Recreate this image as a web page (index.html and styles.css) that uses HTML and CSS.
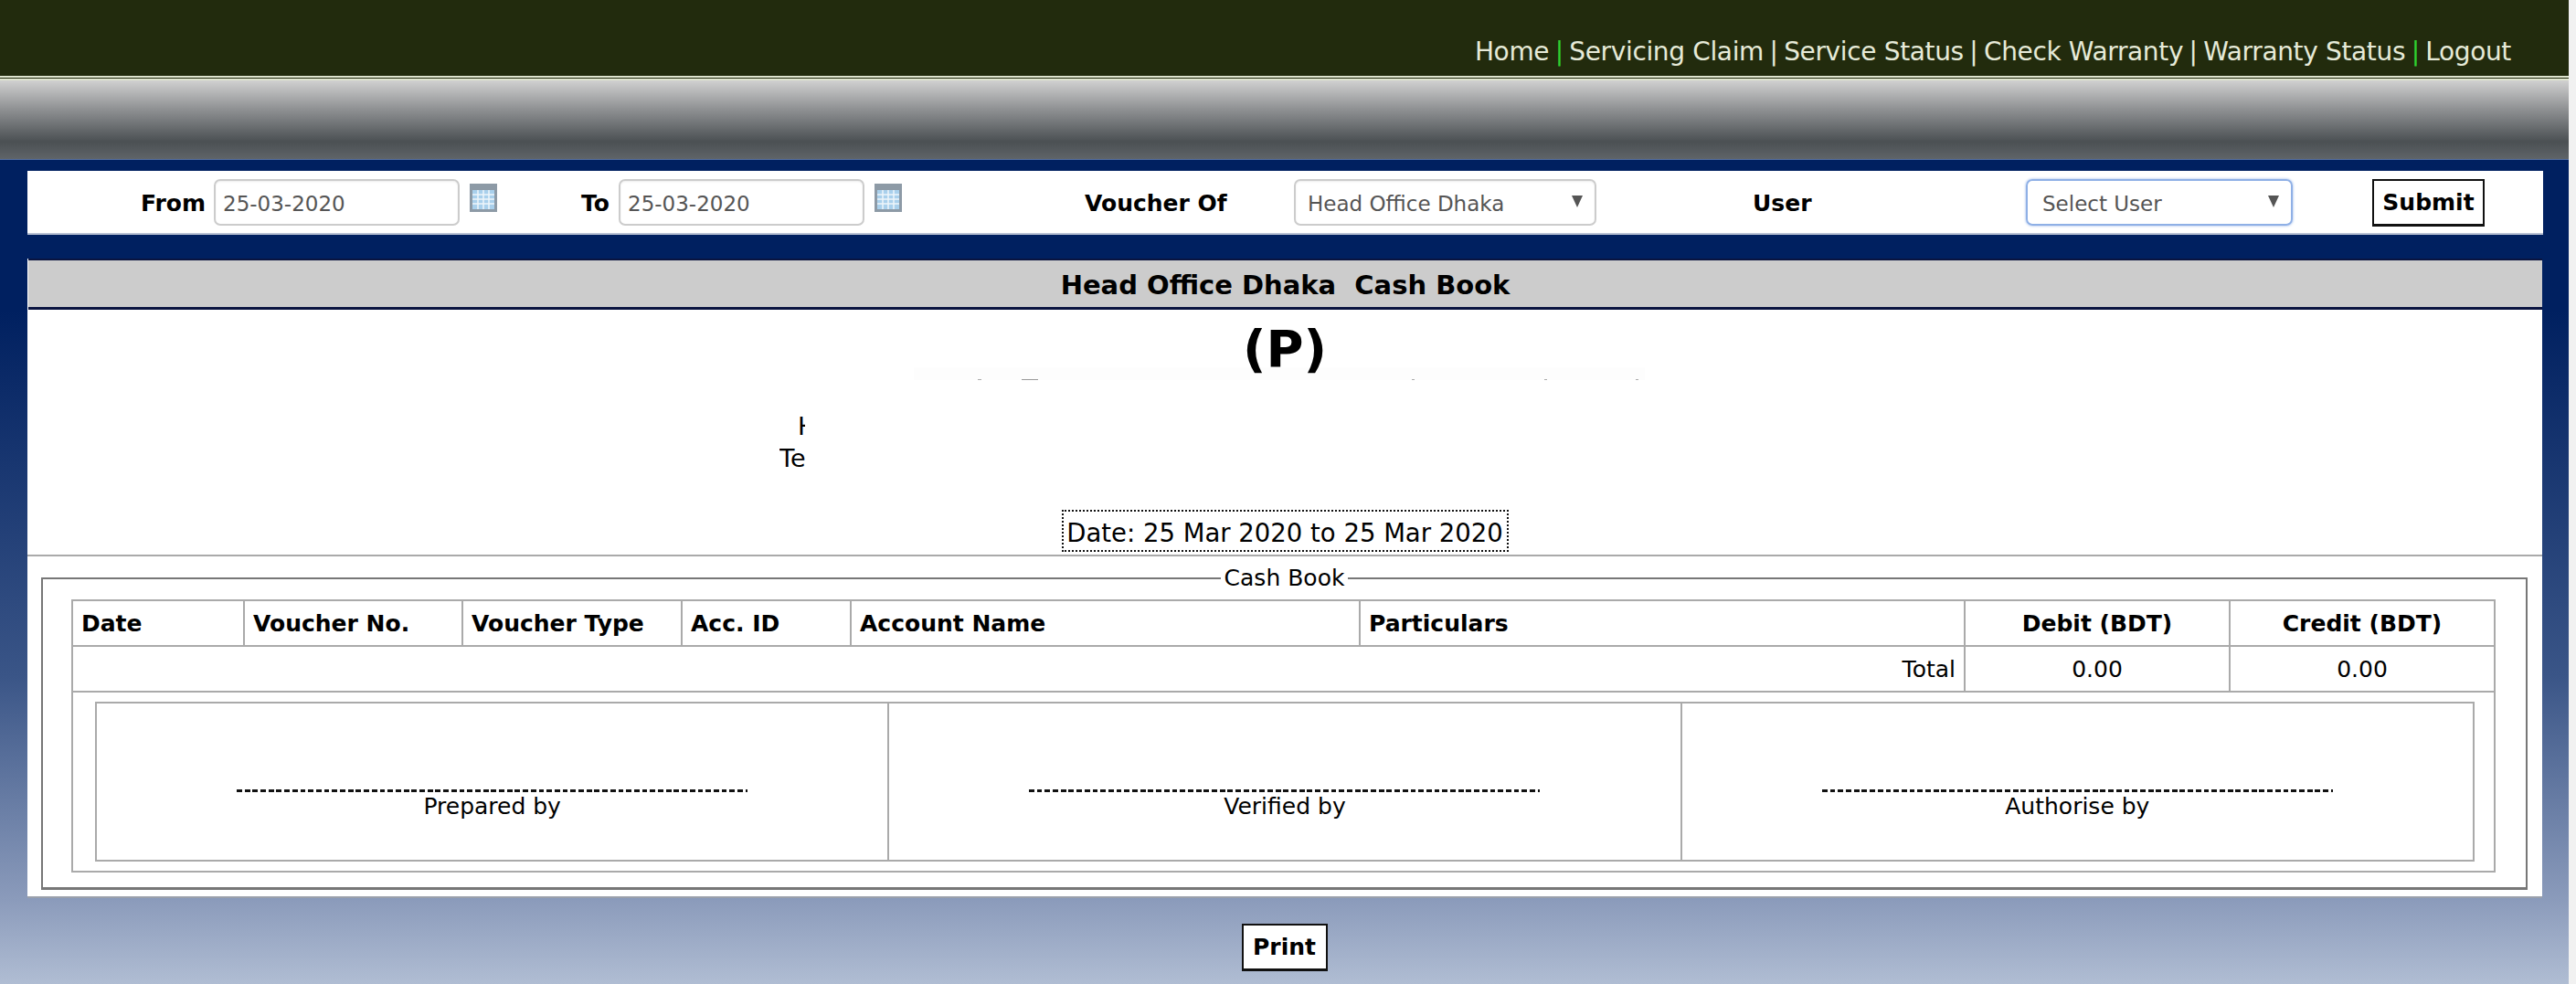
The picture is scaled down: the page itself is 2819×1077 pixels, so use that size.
FILE: index.html
```html
<!DOCTYPE html>
<html lang="en">
<head>
  <meta charset="UTF-8" />
  <title>Cash Book</title>
  <link rel="stylesheet" href="styles.css">
</head>
<body>
  <div class="page">
    <div class="topbar">
      <nav class="nav">
        <a>Home</a><span class="sep green">|</span>
        <a>Servicing Claim</a><span class="sep">|</span>
        <a>Service Status</a><span class="sep">|</span>
        <a>Check Warranty</a><span class="sep">|</span>
        <a>Warranty Status</a><span class="sep green">|</span>
        <a>Logout</a>
      </nav>
    </div>
    <div class="banner"></div>

    <form class="filter">
      <label class="lbl lbl-from">From</label>
      <div class="field date">25-03-2020</div>
      <svg class="cal" viewBox="0 0 30 31"><rect width="30" height="31" fill="#8d9aa6"/><rect x="3" y="7" width="24" height="21" fill="#a9d0ec"/><path d="M3 12h24M3 17h24M3 22h24M9 7v21M15 7v21M21 7v21" stroke="#eef5fa" stroke-width="1.5"/></svg>
      <label class="lbl lbl-to">To</label>
      <div class="field date">25-03-2020</div>
      <svg class="cal" viewBox="0 0 30 31"><rect width="30" height="31" fill="#8d9aa6"/><rect x="3" y="7" width="24" height="21" fill="#a9d0ec"/><path d="M3 12h24M3 17h24M3 22h24M9 7v21M15 7v21M21 7v21" stroke="#eef5fa" stroke-width="1.5"/></svg>
      <label class="lbl lbl-voucher">Voucher Of</label>
      <div class="field sel sel-office">Head Office Dhaka<span class="arrow"></span></div>
      <label class="lbl lbl-user">User</label>
      <div class="field sel sel-user">Select User<span class="arrow"></span></div>
      <button type="button" class="btn btn-submit">Submit</button>
    </form>

    <div class="report">
      <h2 class="report-title">Head Office Dhaka&nbsp; Cash Book</h2>
      <div class="company">(P)</div>
      <div class="smudge"></div>
      <div class="addr"><div class="addr-h">H</div><div>Te</div></div>
      <div class="date-row"><span class="date-box">Date: 25 Mar 2020 to 25 Mar 2020</span></div>
      <hr class="rule">

      <fieldset class="book">
        <legend>Cash Book</legend>
        <table class="ledger">
          <colgroup>
            <col class="c1"><col class="c2"><col class="c3"><col class="c4">
            <col class="c5"><col class="c6"><col class="c7"><col class="c8">
          </colgroup>
          <tr>
            <th>Date</th><th>Voucher No.</th><th>Voucher Type</th><th>Acc. ID</th>
            <th>Account Name</th><th>Particulars</th><th class="mid">Debit (BDT)</th><th class="mid">Credit (BDT)</th>
          </tr>
          <tr>
            <td colspan="6" class="total">Total</td><td class="mid">0.00</td><td class="mid">0.00</td>
          </tr>
          <tr>
            <td colspan="8" class="sign-wrap">
              <div class="signs">
                <div class="sign"><div class="dash"></div>Prepared by</div>
                <div class="sign"><div class="dash"></div>Verified by</div>
                <div class="sign"><div class="dash"></div>Authorise by</div>
              </div>
            </td>
          </tr>
        </table>
      </fieldset>
    </div>

    <div class="print-row"><button type="button" class="btn btn-print">Print</button></div>
  </div>
  <div class="sidebar"></div>
</body>
</html>
```

FILE: styles.css
```css
html, body { height: 100%; }
body {
  margin: 0;
  display: flex;
  background: #f1f1f1;
  font-family: "DejaVu Sans", Verdana, sans-serif;
  font-size: 25px;
  color: #000;
  overflow: hidden;
}
.page {
  width: 2811px;
  height: 1077px;
  flex: none;
  background: linear-gradient(to bottom, #002060 0, #002060 340px, #3a5587 740px, #8b9bbb 985px, #b0bdd3 1077px);
}
.sidebar { flex: 1; }

.topbar { height: 83px; background: #222b0d; display: flex; justify-content: flex-end; border-bottom: 5px double #dfe5cf; }
.nav { padding: 42px 63px 0 0; color: #e6ead8; font-size: 28px; line-height: 30px; white-space: nowrap; display: flex; letter-spacing: -.35px; }
.sep { margin: 0 6.5px; color: #e6ead8; }
.sep.green { color: #2fd12f; }

.banner { height: 86px; background: linear-gradient(to bottom, #d0d0d0 0, #909294 36%, #4b5053 78%, #5f6468 100%); border-bottom: 1px solid #5a72a0; }

.filter {
  display: flex; align-items: center;
  box-sizing: border-box;
  height: 70px; margin: 12px 28px 0 30px; padding-top: 1px;
  background: #fff;
  border-bottom: 2px solid #b9c2d4;
}
.lbl { font-weight: bold; line-height: 30px; white-space: nowrap; flex: none; padding-top: 2px; }
.lbl-from { margin-left: 124px; width: 70px; }
.lbl-to { margin-left: 90px; width: 33px; text-align: right; }
.lbl-voucher { margin-left: 200px; width: 156px; }
.lbl-user { margin-left: 171px; width: 64px; }
.field {
  box-sizing: border-box; height: 51px; margin-left: 10px; flex: none;
  display: flex; align-items: center;
  border: 2px solid #ccc; border-radius: 7px;
  color: #555; font-size: 23px; padding: 2px 0 0 8px;
  box-shadow: inset 0 1px 2px rgba(0,0,0,.08);
}
.date { width: 269px; }
.cal { width: 30px; height: 31px; margin: -11px 0 0 11px; flex: none; }
.sel { position: relative; padding-left: 13px; }
.sel-office { width: 331px; margin-left: 73px; }
.sel-user { width: 292px; margin-left: 235px; padding-left: 16px; border-color: #8fb0e6; box-shadow: 0 0 3px #8fb0e6; }
.arrow { position: absolute; right: 13px; top: 16px; border: 6px solid transparent; border-top: 13px solid #555; border-bottom: 0; }
.btn {
  box-sizing: border-box; background: #fff; border: 2px solid #111;
  font: bold 25px "DejaVu Sans", Verdana, sans-serif; color: #000; padding: 0;
  border-bottom-width: 3px;
}
.btn-submit { width: 123px; height: 52px; margin-left: 87px; flex: none; }

.report { box-sizing: border-box; margin: 26px 29px 0 30px; height: 700px; background: #fff; border-bottom: 2px solid #9aa0ab; }
.report-title {
  margin: 0 0 0 1px; height: 51px; background: #ccc;
  border-top: 2px solid #0a1440; border-bottom: 3px solid #0a1440;
  text-align: center; font-size: 29px; line-height: 54px; color: #000;
}
.company { text-align: center; font-size: 56px; font-weight: bold; line-height: 70px; height: 55px; margin-top: 8px; }
.smudge {
  height: 14px; margin-left: 970px; width: 800px;
  background:
    linear-gradient(#aaa, #aaa) no-repeat 70px 100% / 4px 1px,
    linear-gradient(#999, #999) no-repeat 118px 100% / 18px 1px,
    linear-gradient(#aaa, #aaa) no-repeat 545px 100% / 3px 1px,
    linear-gradient(#aaa, #aaa) no-repeat 690px 100% / 3px 1px,
    linear-gradient(#aaa, #aaa) no-repeat 790px 100% / 3px 1px,
    #fdfdfd;
}
.addr { width: 28px; overflow: hidden; margin: 33px 0 0 823px; white-space: nowrap; font-size: 27px; line-height: 35px; }
.addr-h { padding-left: 20px; }
.date-row { margin-top: 39px; display: flex; justify-content: center; }
.date-box { box-sizing: border-box; width: 489px; height: 46px; border: 2px dotted #111; font-size: 27.5px; line-height: 46px; white-space: nowrap; text-align: center; }
.rule { margin: 3px 0 0; border: 0; border-top: 2px solid #aaa; }

.book { margin: 9px 16px 0 15px; padding: 0 31px; border: 2px solid #777; border-bottom-width: 3px; height: 356px; box-sizing: border-box; min-width: 0; }
.book legend { margin: 0 auto; padding: 0 4px; font-size: 25px; line-height: 30px; }

.ledger { width: 2651px; border-collapse: collapse; table-layout: fixed; margin-top: 8px; }
.c1 { width: 188px; } .c2 { width: 239px; } .c3 { width: 240px; } .c4 { width: 185px; }
.c5 { width: 557px; } .c6 { width: 662px; } .c7 { width: 290px; } .c8 { width: 290px; }
.ledger th, .ledger td { border: 2px solid #aaa; height: 50px; padding: 0 9px; font-size: 25px; box-sizing: border-box; }
.ledger th { text-align: left; font-weight: bold; }
.ledger .mid { text-align: center; }
.total { text-align: right; }
.ledger .sign-wrap { height: 196px; padding: 10px 21px 10px 24px; }

.signs { display: flex; height: 175px; box-sizing: border-box; border: 2px solid #aaa; }
.sign { flex: 1; text-align: center; padding-top: 94px; line-height: 28px; }
.sign + .sign { border-left: 2px solid #aaa; }
.dash { width: 559px; height: 3px; margin: 0 auto 2px; background: repeating-linear-gradient(to right, #111 0 5.8px, transparent 5.8px 8.7px); }

.print-row { text-align: center; margin-top: 28px; }
.btn-print { width: 94px; height: 52px; }
```
